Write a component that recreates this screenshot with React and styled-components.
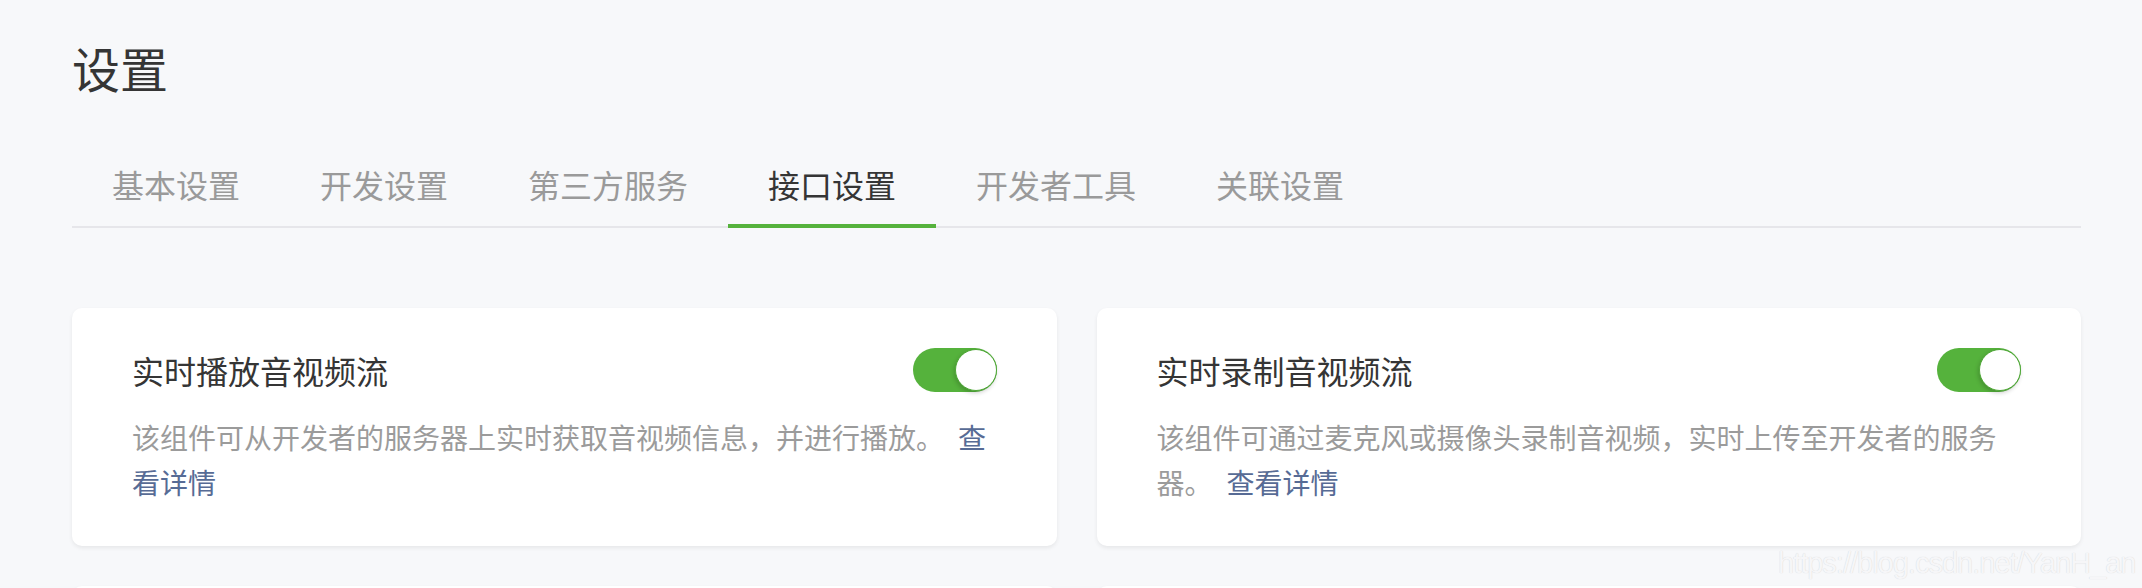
import styled, { createGlobalStyle } from 'styled-components'

const GlobalStyle = createGlobalStyle`
    html, body {
        margin: 0;
        background: #f7f8fa;
    }
    body {
        font-family: "Noto Sans CJK SC", "Noto Sans", sans-serif;
        color: #353535;
        overflow: hidden;
    }
`

const Page = styled.div`
    position: relative;
    padding: 43px 61px 0 72px;
    min-height: 588px;
    box-sizing: border-box;
`

const Title = styled.h1`
    margin: 0;
    font-size: 48px;
    line-height: 48px;
    font-weight: 400;
    color: #353535;
`

const TabBar = styled.div`
    display: flex;
    margin-top: 77px;
    border-bottom: 2px solid #e6e6ea;
`

const Tab = styled.div`
    padding: 0 40px 24px;
    margin-bottom: -2px;
    font-size: 32px;
    line-height: 32px;
    color: ${props => props.active ? '#353535' : '#9a9a9a'};
    border-bottom: 4px solid ${props => props.active ? '#55b23c' : 'transparent'};
    white-space: nowrap;
    cursor: pointer;
`

const Grid = styled.div`
    display: grid;
    grid-template-columns: 1fr 1fr;
    gap: 40px;
    margin-top: 80px;
`

const Card = styled.div`
    background: #fff;
    border-radius: 10px;
    box-shadow: 0 2px 4px rgba(0, 0, 0, 0.07);
    padding: 40px 60px 40px;
    min-height: 158px;
`

const CardHeader = styled.div`
    display: flex;
    align-items: center;
    justify-content: space-between;
    height: 44px;
`

const CardTitle = styled.div`
    font-size: 32px;
    line-height: 44px;
    color: #353535;
`

const Switch = styled.div`
    display: flex;
    justify-content: ${props => props.on ? 'flex-end' : 'flex-start'};
    align-items: center;
    width: 84px;
    height: 44px;
    border-radius: 22px;
    background: ${props => props.on ? '#55b23c' : '#e5e5e5'};
    box-sizing: border-box;
    flex-shrink: 0;
`

const Knob = styled.div`
    width: 42px;
    height: 42px;
    border-radius: 50%;
    background: #fff;
    border: 1px solid #4ea736;
    box-sizing: border-box;
    box-shadow: -1px 2px 4px rgba(0, 0, 0, 0.18);
`

const Desc = styled.p`
    margin: 23px 0 0;
    font-size: 28px;
    line-height: 45px;
    color: #9b9b9b;
`

const Link = styled.a`
    margin-left: 14px;
    color: #576b95;
    text-decoration: none;
    cursor: pointer;
`

const Watermark = styled.div`
    position: absolute;
    left: 1778px;
    top: 546px;
    font-family: "Liberation Sans", Arial, sans-serif;
    font-size: 29px;
    line-height: 34px;
    letter-spacing: -1px;
    color: #f6f6f8;
    text-shadow: 0 0 1px rgba(0, 0, 0, 0.16);
    white-space: nowrap;
    pointer-events: none;
`

const tabs = ['基本设置', '开发设置', '第三方服务', '接口设置', '开发者工具', '关联设置']

const items = [
    {
        title: '实时播放音视频流',
        desc: '该组件可从开发者的服务器上实时获取音视频信息，并进行播放。',
        on: true,
    },
    {
        title: '实时录制音视频流',
        desc: '该组件可通过麦克风或摄像头录制音视频，实时上传至开发者的服务器。',
        on: true,
    },
]

export default function App() {
    return (
        <>
            <GlobalStyle />
            <Page>
                <Title>设置</Title>
                <TabBar>
                    {tabs.map(t => (
                        <Tab key={t} active={t === '接口设置'}>{t}</Tab>
                    ))}
                </TabBar>
                <Grid>
                    {items.map(item => (
                        <Card key={item.title}>
                            <CardHeader>
                                <CardTitle>{item.title}</CardTitle>
                                <Switch on={item.on}>
                                    <Knob />
                                </Switch>
                            </CardHeader>
                            <Desc>
                                {item.desc}
                                <Link>查看详情</Link>
                            </Desc>
                        </Card>
                    ))}
                    {/* next row, only its top edge shows in the viewport */}
                    <Card />
                    <Card />
                </Grid>
                <Watermark>https://blog.csdn.net/YanH_an</Watermark>
            </Page>
        </>
    )
}
